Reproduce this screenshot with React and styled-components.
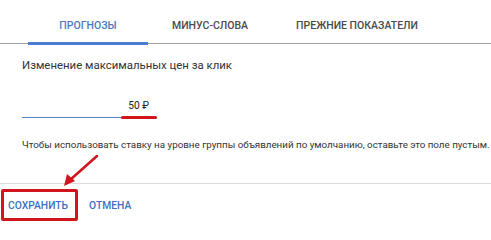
import React from "react";
import styled, { createGlobalStyle } from "styled-components";

const Global = createGlobalStyle`
  html, body { margin: 0; padding: 0; background: #fff; }
  body { font-family: Roboto, "Noto Sans", Arial, sans-serif; }
  * { box-sizing: border-box; }
`;

const Page = styled.div`
  position: relative;
  width: 491px;
  height: 223px;
  overflow: hidden;
  background: #fff;
`;

const TabBar = styled.div`
  display: flex;
  align-items: flex-start;
  height: 44px;
  padding-left: 28px;
  border-bottom: 1px solid #a3a3a3;
`;

const Tab = styled.div`
  min-width: 120px;
  height: 45px;
  padding: 19px 24px 0;
  text-align: center;
  font-size: 10.5px;
  line-height: 13px;
  font-weight: 500;
  color: ${(p) => (p.$active ? "#4e79c6" : "#4a4a4a")};
  border-bottom: 3px solid ${(p) => (p.$active ? "#4e7bcf" : "transparent")};
  position: relative;
  z-index: 1;
`;

const Content = styled.div`
  padding: 0 22px;
`;

const Label = styled.div`
  margin-top: 14px;
  font-size: 11.4px;
  line-height: 14px;
  color: #333;
`;

const Field = styled.div`
  margin-top: 27px;
  width: 135px;
  padding: 0 8px 4px 0;
  text-align: right;
  font-size: 10.2px;
  line-height: 14px;
  color: #222;
  border-bottom: 1px solid #5a82c8;
`;

const Help = styled.div`
  margin-top: 20px;
  font-size: 9.8px;
  line-height: 13px;
  color: #333;
  white-space: nowrap;
`;

const Divider = styled.div`
  margin-top: 32px;
  height: 1px;
  background: #dcdcdc;
`;

const Actions = styled.div`
  display: flex;
  gap: 5px;
  padding-top: 3px;
`;

const Button = styled.div`
  height: 36px;
  padding: 0 8px;
  display: flex;
  align-items: center;
  font-size: 10.3px;
  font-weight: 500;
  color: #3d6fc2;
`;

const RedLine = styled.div`
  position: absolute;
  left: 121px;
  top: 116px;
  width: 36px;
  height: 3px;
  border-radius: 2px;
  background: #d0161c;
`;

const RedBox = styled.div`
  position: absolute;
  left: 1px;
  top: 189px;
  width: 77px;
  height: 32px;
  border: 3px solid #d0161c;
  border-radius: 2px;
`;

const Arrow = styled.svg`
  position: absolute;
  left: 0;
  top: 0;
  pointer-events: none;
`;

export default function App() {
  return (
    <Page>
      <Global />
      <TabBar>
        <Tab $active>ПРОГНОЗЫ</Tab>
        <Tab>МИНУС-СЛОВА</Tab>
        <Tab>ПРЕЖНИЕ ПОКАЗАТЕЛИ</Tab>
      </TabBar>
      <Content>
        <Label>Изменение максимальных цен за клик</Label>
        <Field>50 ₽</Field>
        <Help>
          Чтобы использовать ставку на уровне группы объявлений по умолчанию, оставьте это поле пустым.
        </Help>
      </Content>
      <Divider />
      <Actions>
        <Button>СОХРАНИТЬ</Button>
        <Button>ОТМЕНА</Button>
      </Actions>
      <RedLine />
      <RedBox />
      <Arrow width="491" height="223" viewBox="0 0 491 223">
        <line x1="97" y1="156" x2="70" y2="180" stroke="#d0161c" strokeWidth="2.5" strokeLinecap="round" />
        <polygon points="64,186 67,174 75,181" fill="#d0161c" />
      </Arrow>
    </Page>
  );
}
